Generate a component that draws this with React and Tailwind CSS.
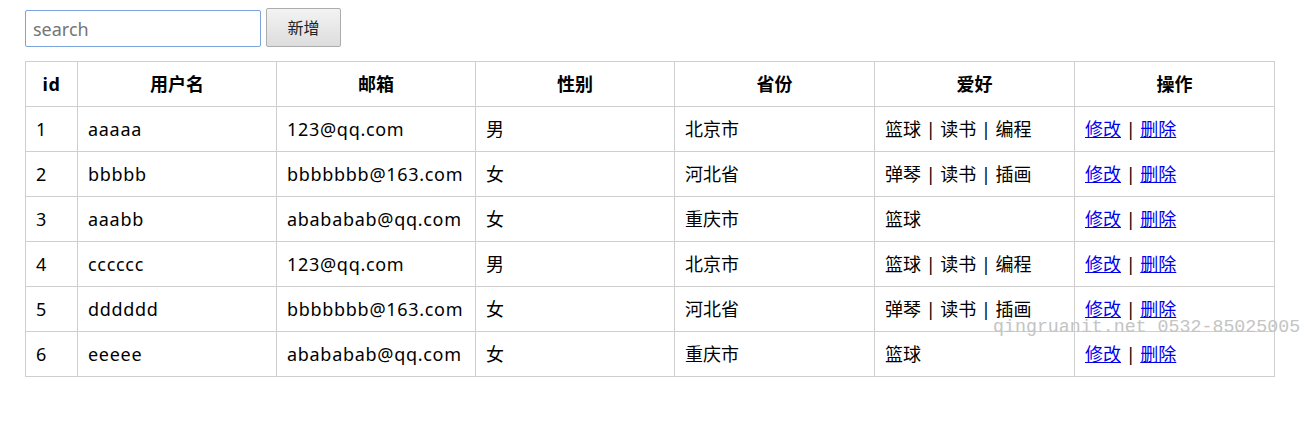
const users = [
  { id: 1, name: 'aaaaa', email: '123@qq.com', sex: '男', prov: '北京市', hobby: '篮球 | 读书 | 编程' },
  { id: 2, name: 'bbbbb', email: 'bbbbbbb@163.com', sex: '女', prov: '河北省', hobby: '弹琴 | 读书 | 插画' },
  { id: 3, name: 'aaabb', email: 'abababab@qq.com', sex: '女', prov: '重庆市', hobby: '篮球' },
  { id: 4, name: 'cccccc', email: '123@qq.com', sex: '男', prov: '北京市', hobby: '篮球 | 读书 | 编程' },
  { id: 5, name: 'dddddd', email: 'bbbbbbb@163.com', sex: '女', prov: '河北省', hobby: '弹琴 | 读书 | 插画' },
  { id: 6, name: 'eeeee', email: 'abababab@qq.com', sex: '女', prov: '重庆市', hobby: '篮球' },
];

export default function App() {
  return (
    <div className="relative min-h-[422px] bg-white px-[25px] pt-[8px] font-['Noto_Sans','Noto_Sans_CJK_SC',sans-serif] text-[18px] text-black">
      <div className="flex items-start gap-[5px]">
        <input
          placeholder="search"
          className="mt-[2px] h-[37px] w-[236px] rounded-[2px] border border-[#7ba3dc] px-[7px] text-[18px] outline-none placeholder:text-[#757575]"
        />
        <button className="h-[39px] w-[75px] rounded-[2px] border border-[#acacac] bg-gradient-to-b from-[#f3f3f3] to-[#dddddd] text-[16px] text-[#222]">
          新增
        </button>
      </div>

      <table className="mt-[14px] w-[1250px] table-fixed border-collapse">
        <thead>
          <tr className="h-[45px]">
            <th className="w-[52px] border border-[#cfcfcf] font-bold tracking-[0.7px]">id</th>
            <th className="w-[199px] border border-[#cfcfcf] font-bold">用户名</th>
            <th className="w-[199px] border border-[#cfcfcf] font-bold">邮箱</th>
            <th className="w-[199px] border border-[#cfcfcf] font-bold">性别</th>
            <th className="w-[200px] border border-[#cfcfcf] font-bold">省份</th>
            <th className="w-[200px] border border-[#cfcfcf] font-bold">爱好</th>
            <th className="w-[200px] border border-[#cfcfcf] font-bold">操作</th>
          </tr>
        </thead>
        <tbody>
          {users.map((u) => (
            <tr key={u.id} className="h-[45px]">
              <td className="border border-[#cfcfcf] px-[10px]">{u.id}</td>
              <td className="border border-[#cfcfcf] px-[10px] tracking-[0.7px]">{u.name}</td>
              <td className="border border-[#cfcfcf] px-[10px] whitespace-nowrap tracking-[0.7px]">{u.email}</td>
              <td className="border border-[#cfcfcf] px-[10px]">{u.sex}</td>
              <td className="border border-[#cfcfcf] px-[10px]">{u.prov}</td>
              <td className="border border-[#cfcfcf] px-[10px]">{u.hobby}</td>
              <td className="border border-[#cfcfcf] px-[10px]">
                <a href="#" className="text-[#0000ee] underline">修改</a> | <a href="#" className="text-[#0000ee] underline">删除</a>
              </td>
            </tr>
          ))}
        </tbody>
      </table>

      {/* watermark */}
      <div className="pointer-events-none absolute left-[993px] top-[314px] font-['Liberation_Mono',monospace] text-[18.3px] text-[#c4c4c4]">
        qingruanit.net 0532-85025005
      </div>
    </div>
  );
}
